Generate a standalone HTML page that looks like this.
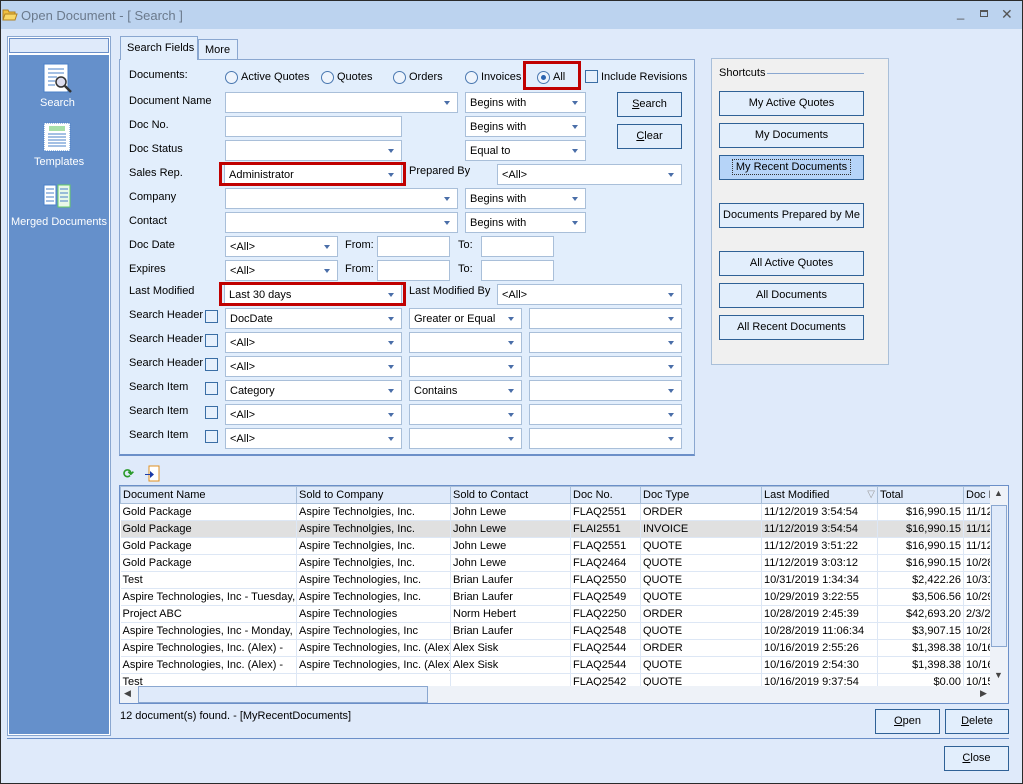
<!DOCTYPE html>
<html><head><meta charset="utf-8"><style>
*{box-sizing:border-box}
body{margin:0;width:1023px;height:784px;overflow:hidden;font-family:"Liberation Sans",sans-serif;font-size:11px;color:#000;background:#dfeafa;position:relative}
.a{position:absolute}
.win{left:0;top:0;width:1023px;height:784px;border:1px solid #2a2a2a;background:#dfeafa}
.title{left:1px;top:1px;width:1021px;height:28px;background:#bcd3ef}
.lbl{position:absolute;white-space:nowrap}
.cb{position:absolute;height:21px;background:#fff;border:1px solid #a9bfd9;padding:4px 4px;white-space:nowrap;overflow:hidden}
.cb.d::after{content:"";position:absolute;right:7px;top:8px;border-left:3.5px solid transparent;border-right:3.5px solid transparent;border-top:4px solid #4a6ea8}
.btn{position:absolute;background:#e2eefc;border:1px solid #2f6196;text-align:center;line-height:22px;white-space:nowrap}
.chk{position:absolute;width:13px;height:13px;border:1px solid #3a6ea5;background:#e6f0fc}
.rad{position:absolute;width:13px;height:13px;border:1px solid #4a78b0;border-radius:50%;background:#eef4fc}
.red{position:absolute;border:3px solid #c00000}
table{border-collapse:collapse;table-layout:fixed}
td{height:17px;padding:0 2px;white-space:nowrap;overflow:hidden;border-right:1px solid #dde7f5;border-bottom:1px solid #dde7f5;font-size:11px}
th{height:17px;padding:0 2px;font-weight:normal;text-align:left;background:#dfeafa;border:1px solid #a9bfd9;white-space:nowrap;overflow:hidden}
.r{text-align:right}
</style></head><body>
<div class="a win"></div>
<div class="a title"></div>
<svg class="a" style="left:2px;top:8px" width="16" height="13"><path d="M1 2h5l1 2h6v8H1z" fill="#f0c040" stroke="#b08020"/><path d="M3 6h12l-2 6H1z" fill="#f8d868" stroke="#b08020"/></svg>
<div class="lbl" style="left:21px;top:8px;font-size:13px;color:#6b7a8c">Open Document - [ Search ]</div>
<div class="lbl" style="left:957px;top:5px;color:#555;font-size:13px">_</div>
<div class="a" style="left:980px;top:10px;width:8px;height:7px;border:1px solid #555;border-top-width:2px"></div>
<div class="lbl" style="left:1001px;top:6px;color:#555;font-size:14px">✕</div>

<!-- left panel -->
<div class="a" style="left:7px;top:36px;width:104px;height:700px;background:#fff;border:1px solid #8aa7d0"></div>
<div class="a" style="left:9px;top:38px;width:100px;height:15px;background:#dfeafa;border:1px solid #6b8fc8"></div>
<div class="a" style="left:9px;top:55px;width:100px;height:679px;background:#6590cb"></div>
<svg class="a" style="left:43px;top:63px" width="30" height="32"><rect x="1" y="1" width="24" height="28" fill="#fff" stroke="#4a80c8"/><g stroke="#4a80c8"><line x1="5" y1="6" x2="21" y2="6"/><line x1="5" y1="10" x2="21" y2="10"/><line x1="5" y1="14" x2="14" y2="14"/><line x1="5" y1="18" x2="12" y2="18"/><line x1="5" y1="22" x2="12" y2="22"/></g><circle cx="18" cy="19" r="5" fill="#dde" stroke="#333" stroke-width="1.5"/><line x1="22" y1="23" x2="28" y2="29" stroke="#333" stroke-width="2.5"/></svg>
<div class="lbl" style="left:40px;top:97px;color:#fff">Search</div>
<svg class="a" style="left:43px;top:122px" width="28" height="30"><rect x="1" y="1" width="26" height="28" fill="#fff" stroke="#4a80c8" stroke-dasharray="1 1"/><rect x="6" y="4" width="16" height="5" fill="#a8e0a8"/><g stroke="#4a80c8"><line x1="5" y1="12" x2="23" y2="12"/><line x1="5" y1="15" x2="23" y2="15"/><line x1="5" y1="18" x2="23" y2="18"/><line x1="5" y1="21" x2="23" y2="21"/><line x1="5" y1="24" x2="23" y2="24"/></g></svg>
<div class="lbl" style="left:34px;top:156px;color:#fff">Templates</div>
<svg class="a" style="left:43px;top:184px" width="28" height="24"><rect x="1" y="1" width="12" height="20" fill="#fff" stroke="#4a80c8"/><rect x="15" y="1" width="12" height="22" fill="#e8f8e8" stroke="#6c6"/><g stroke="#4a80c8"><line x1="3" y1="5" x2="11" y2="5"/><line x1="3" y1="9" x2="11" y2="9"/><line x1="3" y1="13" x2="11" y2="13"/><line x1="3" y1="17" x2="11" y2="17"/><line x1="17" y1="5" x2="25" y2="5"/><line x1="17" y1="9" x2="25" y2="9"/><line x1="17" y1="13" x2="25" y2="13"/><line x1="17" y1="17" x2="25" y2="17"/></g></svg>
<div class="lbl" style="left:11px;top:216px;color:#fff">Merged Documents</div>

<!-- tabs -->
<div class="a" style="left:119px;top:59px;width:576px;height:397px;background:#e2eefc;border:1px solid #8aa7d0;border-bottom:2px solid #6b8fc8"></div>
<div class="a" style="left:120px;top:36px;width:78px;height:24px;background:#e2eefc;border:1px solid #8aa7d0;border-bottom:none"></div>
<div class="lbl" style="left:127px;top:42px">Search Fields</div>
<div class="a" style="left:198px;top:39px;width:40px;height:20px;background:#e2eefc;border:1px solid #8aa7d0;border-bottom:none"></div>
<div class="lbl" style="left:205px;top:44px">More</div>

<div class="lbl" style="left:129px;top:69px">Documents:</div>
<div class="rad" style="left:225px;top:71px"></div><div class="lbl" style="left:241px;top:71px">Active Quotes</div>
<div class="rad" style="left:321px;top:71px"></div><div class="lbl" style="left:337px;top:71px">Quotes</div>
<div class="rad" style="left:393px;top:71px"></div><div class="lbl" style="left:409px;top:71px">Orders</div>
<div class="rad" style="left:465px;top:71px"></div><div class="lbl" style="left:481px;top:71px">Invoices</div>
<div class="rad" style="left:537px;top:71px"></div><div class="a" style="left:541px;top:75px;width:5px;height:5px;border-radius:50%;background:#2b64b0"></div><div class="lbl" style="left:553px;top:71px">All</div>
<div class="red" style="left:523px;top:61px;width:58px;height:29px"></div>
<div class="chk" style="left:585px;top:70px"></div><div class="lbl" style="left:601px;top:71px">Include Revisions</div>

<div class="lbl" style="left:129px;top:95px">Document Name</div>
<div class="cb d" style="left:225px;top:92px;width:233px"></div>
<div class="cb d" style="left:465px;top:92px;width:121px">Begins with</div>
<div class="lbl" style="left:129px;top:119px">Doc No.</div>
<div class="cb" style="left:225px;top:116px;width:177px"></div>
<div class="cb d" style="left:465px;top:116px;width:121px">Begins with</div>
<div class="lbl" style="left:129px;top:143px">Doc Status</div>
<div class="cb d" style="left:225px;top:140px;width:177px"></div>
<div class="cb d" style="left:465px;top:140px;width:121px">Equal to</div>
<div class="btn" style="left:617px;top:92px;width:65px;height:25px"><u>S</u>earch</div>
<div class="btn" style="left:617px;top:124px;width:65px;height:25px"><u>C</u>lear</div>

<div class="lbl" style="left:129px;top:167px">Sales Rep.</div>
<div class="cb d" style="left:224px;top:164px;width:178px">Administrator</div>
<div class="red" style="left:219px;top:162px;width:187px;height:24px"></div>
<div class="lbl" style="left:409px;top:165px">Prepared By</div>
<div class="cb d" style="left:497px;top:164px;width:185px">&lt;All&gt;</div>

<div class="lbl" style="left:129px;top:191px">Company</div>
<div class="cb d" style="left:225px;top:188px;width:233px"></div>
<div class="cb d" style="left:465px;top:188px;width:121px">Begins with</div>
<div class="lbl" style="left:129px;top:215px">Contact</div>
<div class="cb d" style="left:225px;top:212px;width:233px"></div>
<div class="cb d" style="left:465px;top:212px;width:121px">Begins with</div>

<div class="lbl" style="left:129px;top:239px">Doc Date</div>
<div class="cb d" style="left:225px;top:236px;width:113px">&lt;All&gt;</div>
<div class="lbl" style="left:345px;top:239px">From:</div>
<div class="cb" style="left:377px;top:236px;width:73px"></div>
<div class="lbl" style="left:458px;top:239px">To:</div>
<div class="cb" style="left:481px;top:236px;width:73px"></div>
<div class="lbl" style="left:129px;top:263px">Expires</div>
<div class="cb d" style="left:225px;top:260px;width:113px">&lt;All&gt;</div>
<div class="lbl" style="left:345px;top:263px">From:</div>
<div class="cb" style="left:377px;top:260px;width:73px"></div>
<div class="lbl" style="left:458px;top:263px">To:</div>
<div class="cb" style="left:481px;top:260px;width:73px"></div>

<div class="lbl" style="left:129px;top:285px">Last Modified</div>
<div class="cb d" style="left:224px;top:284px;width:178px">Last 30 days</div>
<div class="red" style="left:219px;top:282px;width:187px;height:24px"></div>
<div class="lbl" style="left:409px;top:285px">Last Modified By</div>
<div class="cb d" style="left:497px;top:284px;width:185px">&lt;All&gt;</div>

<div class="lbl" style="left:129px;top:309px">Search Header</div><div class="chk" style="left:205px;top:310px"></div>
<div class="cb d" style="left:225px;top:308px;width:177px">DocDate</div>
<div class="cb d" style="left:409px;top:308px;width:113px">Greater or Equal</div>
<div class="cb d" style="left:529px;top:308px;width:153px"></div>
<div class="lbl" style="left:129px;top:333px">Search Header</div><div class="chk" style="left:205px;top:334px"></div>
<div class="cb d" style="left:225px;top:332px;width:177px">&lt;All&gt;</div>
<div class="cb d" style="left:409px;top:332px;width:113px"></div>
<div class="cb d" style="left:529px;top:332px;width:153px"></div>
<div class="lbl" style="left:129px;top:357px">Search Header</div><div class="chk" style="left:205px;top:358px"></div>
<div class="cb d" style="left:225px;top:356px;width:177px">&lt;All&gt;</div>
<div class="cb d" style="left:409px;top:356px;width:113px"></div>
<div class="cb d" style="left:529px;top:356px;width:153px"></div>
<div class="lbl" style="left:129px;top:381px">Search Item</div><div class="chk" style="left:205px;top:382px"></div>
<div class="cb d" style="left:225px;top:380px;width:177px">Category</div>
<div class="cb d" style="left:409px;top:380px;width:113px">Contains</div>
<div class="cb d" style="left:529px;top:380px;width:153px"></div>
<div class="lbl" style="left:129px;top:405px">Search Item</div><div class="chk" style="left:205px;top:406px"></div>
<div class="cb d" style="left:225px;top:404px;width:177px">&lt;All&gt;</div>
<div class="cb d" style="left:409px;top:404px;width:113px"></div>
<div class="cb d" style="left:529px;top:404px;width:153px"></div>
<div class="lbl" style="left:129px;top:429px">Search Item</div><div class="chk" style="left:205px;top:430px"></div>
<div class="cb d" style="left:225px;top:428px;width:177px">&lt;All&gt;</div>
<div class="cb d" style="left:409px;top:428px;width:113px"></div>
<div class="cb d" style="left:529px;top:428px;width:153px"></div>

<!-- shortcuts -->
<div class="a" style="left:711px;top:58px;width:178px;height:307px;background:#f0f0f0;border:1px solid #a9bfd9"></div>
<div class="lbl" style="left:719px;top:67px">Shortcuts</div>
<div class="a" style="left:767px;top:73px;width:97px;height:1px;background:#8aa7d0"></div>
<div class="btn" style="left:719px;top:91px;width:145px;height:25px">My Active Quotes</div>
<div class="btn" style="left:719px;top:123px;width:145px;height:25px">My Documents</div>
<div class="btn" style="left:719px;top:155px;width:145px;height:25px;background:#b6d4f8"><span style="outline:1px dotted #333;padding:1px 3px">My Recent Documents</span></div>
<div class="btn" style="left:719px;top:203px;width:145px;height:25px">Documents Prepared by Me</div>
<div class="btn" style="left:719px;top:251px;width:145px;height:25px">All Active Quotes</div>
<div class="btn" style="left:719px;top:283px;width:145px;height:25px">All Documents</div>
<div class="btn" style="left:719px;top:315px;width:145px;height:25px">All Recent Documents</div>

<!-- toolbar icons -->
<div class="lbl" style="left:123px;top:466px;color:#2a9a2a;font-size:13px;font-weight:bold">⟳</div>
<svg class="a" style="left:144px;top:465px" width="16" height="17"><rect x="5" y="1" width="10" height="15" fill="#fff" stroke="#e09020"/><path d="M1 9h5v-3l4 3.5-4 3.5v-3H1z" fill="#1a3aa8"/></svg>

<!-- grid -->
<div class="a" style="left:119px;top:485px;width:890px;height:219px;background:#fff;border:1px solid #6b8fc8;overflow:hidden">
<table style="width:872px">
<colgroup><col style="width:176px"><col style="width:154px"><col style="width:120px"><col style="width:70px"><col style="width:121px"><col style="width:116px"><col style="width:86px"><col style="width:29px"></colgroup>
<tr><th>Document Name</th><th>Sold to Company</th><th>Sold to Contact</th><th>Doc No.</th><th>Doc Type</th><th>Last Modified <span style="float:right;color:#999;font-size:10px">▽</span></th><th>Total</th><th>Doc Date</th></tr>
<tr><td>Gold Package</td><td>Aspire Technolgies, Inc.</td><td>John Lewe</td><td>FLAQ2551</td><td>ORDER</td><td>11/12/2019 3:54:54</td><td class="r">$16,990.15</td><td>11/12</td></tr>
<tr style="background:#e0e0e0"><td>Gold Package</td><td>Aspire Technolgies, Inc.</td><td>John Lewe</td><td>FLAI2551</td><td>INVOICE</td><td>11/12/2019 3:54:54</td><td class="r">$16,990.15</td><td>11/12</td></tr>
<tr><td>Gold Package</td><td>Aspire Technolgies, Inc.</td><td>John Lewe</td><td>FLAQ2551</td><td>QUOTE</td><td>11/12/2019 3:51:22</td><td class="r">$16,990.15</td><td>11/12</td></tr>
<tr><td>Gold Package</td><td>Aspire Technolgies, Inc.</td><td>John Lewe</td><td>FLAQ2464</td><td>QUOTE</td><td>11/12/2019 3:03:12</td><td class="r">$16,990.15</td><td>10/28</td></tr>
<tr><td>Test</td><td>Aspire Technologies, Inc.</td><td>Brian Laufer</td><td>FLAQ2550</td><td>QUOTE</td><td>10/31/2019 1:34:34</td><td class="r">$2,422.26</td><td>10/31</td></tr>
<tr><td>Aspire Technologies, Inc - Tuesday,</td><td>Aspire Technologies, Inc.</td><td>Brian Laufer</td><td>FLAQ2549</td><td>QUOTE</td><td>10/29/2019 3:22:55</td><td class="r">$3,506.56</td><td>10/29</td></tr>
<tr><td>Project ABC</td><td>Aspire Technologies</td><td>Norm Hebert</td><td>FLAQ2250</td><td>ORDER</td><td>10/28/2019 2:45:39</td><td class="r">$42,693.20</td><td>2/3/2</td></tr>
<tr><td>Aspire Technologies, Inc - Monday,</td><td>Aspire Technologies, Inc</td><td>Brian Laufer</td><td>FLAQ2548</td><td>QUOTE</td><td>10/28/2019 11:06:34</td><td class="r">$3,907.15</td><td>10/28</td></tr>
<tr><td>Aspire Technologies, Inc. (Alex) -</td><td>Aspire Technologies, Inc. (Alex)</td><td>Alex Sisk</td><td>FLAQ2544</td><td>ORDER</td><td>10/16/2019 2:55:26</td><td class="r">$1,398.38</td><td>10/16</td></tr>
<tr><td>Aspire Technologies, Inc. (Alex) -</td><td>Aspire Technologies, Inc. (Alex)</td><td>Alex Sisk</td><td>FLAQ2544</td><td>QUOTE</td><td>10/16/2019 2:54:30</td><td class="r">$1,398.38</td><td>10/16</td></tr>
<tr><td>Test</td><td></td><td></td><td>FLAQ2542</td><td>QUOTE</td><td>10/16/2019 9:37:54</td><td class="r">$0.00</td><td>10/15</td></tr>
</table>
<div class="a" style="left:870px;top:0;width:18px;height:200px;background:#eef2f8"></div>
<div class="a" style="left:871px;top:19px;width:16px;height:142px;background:#dfeafa;border:1px solid #8aa7d0"></div>
<div class="lbl" style="left:874px;top:2px;font-size:9px;color:#444">▲</div>
<div class="lbl" style="left:874px;top:184px;font-size:9px;color:#444">▼</div>
<div class="a" style="left:0;top:200px;width:888px;height:17px;background:#eef2f8"></div>
<div class="a" style="left:18px;top:200px;width:290px;height:17px;background:#dfeafa;border:1px solid #8aa7d0"></div>
<div class="lbl" style="left:4px;top:202px;font-size:9px;color:#444">◀</div>
<div class="lbl" style="left:860px;top:202px;font-size:9px;color:#444">▶</div>
</div>

<div class="lbl" style="left:120px;top:710px">12 document(s) found. - [MyRecentDocuments]</div>
<div class="btn" style="left:875px;top:709px;width:65px;height:25px"><u>O</u>pen</div>
<div class="btn" style="left:945px;top:709px;width:64px;height:25px"><u>D</u>elete</div>
<div class="a" style="left:7px;top:738px;width:1002px;height:1px;background:#6b8fc8"></div>
<div class="btn" style="left:944px;top:746px;width:65px;height:25px"><u>C</u>lose</div>
</body></html>
